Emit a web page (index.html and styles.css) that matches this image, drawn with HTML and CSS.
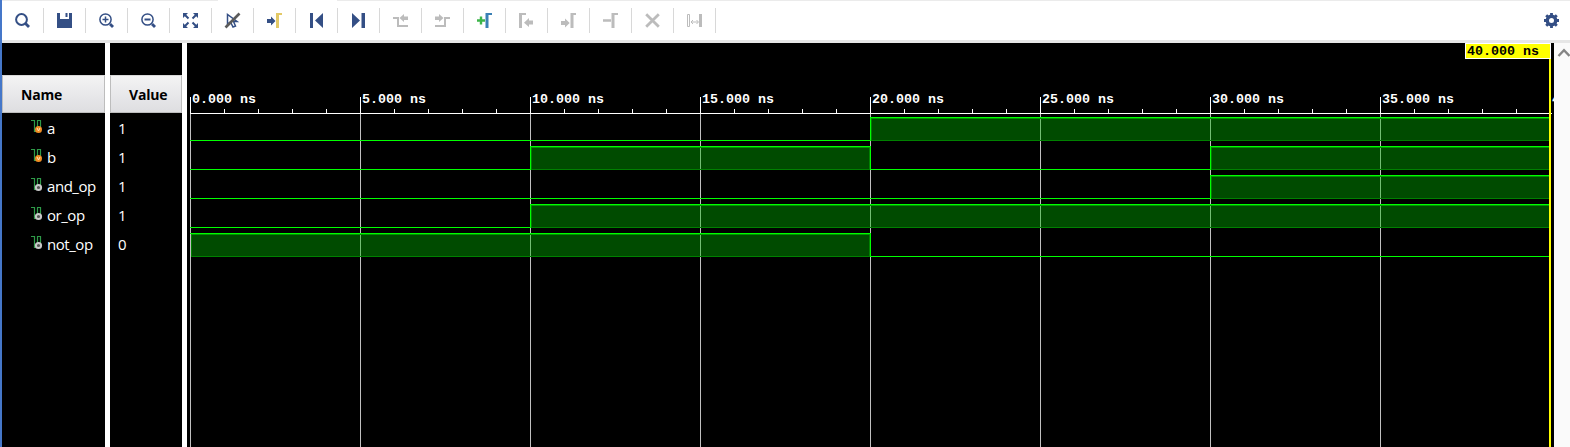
FILE: index.html
```html
<!DOCTYPE html>
<html lang="en">
<head>
<meta charset="utf-8">
<title>Waveform</title>
<link rel="stylesheet" href="styles.css">
</head>
<body>
<div class="window">
  <header class="toolbar">
    <div class="tool"><svg class="icon navy" viewBox="0 0 16 16"><circle cx="6.5" cy="6.5" r="5.4" class="line2"/><path d="M10.5 10.5L14 14" class="line3"/></svg></div>
    <div class="tool"><svg class="icon navy" viewBox="0 0 16 16"><path class="solid" d="M0 0H3V6H12V0H15V15H0zM8.5 0H10.5V4H8.5z"/></svg></div>
    <div class="tool"><svg class="icon navy" viewBox="0 0 16 16"><circle cx="6.5" cy="6.5" r="5.6" class="line15"/><path d="M3.5 6.5H9.5M6.5 3.5V9.5" class="line15"/><path d="M11 11L14 14" class="line3"/></svg></div>
    <div class="tool"><svg class="icon navy" viewBox="0 0 16 16"><circle cx="6.5" cy="6.5" r="5.6" class="line15"/><path d="M3.5 6.5H9.5" class="line2"/><path d="M11 11L14 14" class="line3"/></svg></div>
    <div class="tool"><svg class="icon navy" viewBox="0 0 16 16"><path class="solid" d="M0 0H5L0 5zM15 0V5L10 0zM0 15V10L5 15zM15 15H10L15 10z"/><path class="line2" d="M2 2L5.5 5.5M13 2L9.5 5.5M2 13L5.5 9.5M13 13L9.5 9.5"/></svg></div>
    <div class="tool"><svg class="icon navy" viewBox="0 0 16 16"><path class="line15" d="M2.5 1.5V11L5.5 9L8 14L10.5 13L8.5 8.5H12z"/><path class="slash" d="M.5 14.5L14.5 .5"/></svg></div>
    <div class="tool"><svg class="icon navy" viewBox="0 0 16 16"><path class="solid" d="M0 6H4V3.5L8.5 8L4 12.5V10H0z"/><path class="gold" d="M9 0H15V2H12V15H9z"/></svg></div>
    <div class="tool"><svg class="icon navy" viewBox="0 0 16 16"><path class="solid" d="M1 0H4V15H1zM14 0V15L6 7.5z"/></svg></div>
    <div class="tool"><svg class="icon navy" viewBox="0 0 16 16"><path class="solid" d="M1 0L9 7.5L1 15zM10.5 0H14V15H10.5z"/></svg></div>
    <div class="tool"><svg class="icon grey" viewBox="0 0 16 16"><path class="solid" d="M0 4H6V12H15V14H4V6H0zM15 3.5H11V1L6.5 5L11 9V7H15z"/></svg></div>
    <div class="tool"><svg class="icon grey" viewBox="0 0 16 16"><path class="solid" d="M15 4H9V12H0V14H11V6H15zM0 3.5H4V1L8.5 5L4 9V7H0z"/></svg></div>
    <div class="tool"><svg class="icon" viewBox="0 0 16 16"><path class="green" d="M0 6.3H2.8V3.5H5.2V6.3H8V8.7H5.2V11.5H2.8V8.7H0z"/><path class="blue" d="M8.5 0H15V2H11.5V15H8.5z"/></svg></div>
    <div class="tool"><svg class="icon grey" viewBox="0 0 16 16"><path class="solid" d="M0 0H7V2H3V15H0zM14 7.5H10V5L5 9.7L10 14V11.5H14z"/></svg></div>
    <div class="tool"><svg class="icon grey" viewBox="0 0 16 16"><path class="solid" d="M9.5 0H15V2H12.5V15H9.5zM0 8H4V5.5L8.7 10L4 14.5V12H0z"/></svg></div>
    <div class="tool"><svg class="icon grey" viewBox="0 0 16 16"><path class="solid" d="M8.5 0H15V2H11.5V15H8.5zM0 6.3H8V8.7H0z"/></svg></div>
    <div class="tool"><svg class="icon grey" viewBox="0 0 16 16"><path class="line3" d="M1.2 1.2L13.8 13.8M13.8 1.2L1.2 13.8"/></svg></div>
    <div class="tool"><svg class="icon grey" viewBox="0 0 16 16"><path class="line1" d="M.5 1.5H2.5V13.5H.5zM4 9H11M6 7L4 9L6 11M9.5 7L11.5 9L9.5 11"/><path class="solid" d="M12 1H15V14H12z"/></svg></div>
    <svg class="gear navy" viewBox="0 0 16 16"><circle cx="7.5" cy="7.5" r="4.2" class="ring"/><path class="line3" d="M7.5 0V2.5M7.5 12.5V15M0 7.5H2.5M12.5 7.5H15M2.2 2.2L4 4M11 11L12.8 12.8M12.8 2.2L11 4M4 11L2.2 12.8"/></svg>
  </header>
  <main class="panes">
    <section class="column names">
      <div class="heading">Name</div>
      <div class="row"><svg class="signal" viewBox="0 0 12 14"><use href="#pulse"/><circle cx="7.5" cy="9.5" r="3.5" class="orange"/><path class="mark" d="M6 8L7.5 11L9 8"/></svg>a</div>
      <div class="row"><svg class="signal" viewBox="0 0 12 14"><use href="#pulse"/><circle cx="7.5" cy="9.5" r="3.5" class="orange"/><path class="mark" d="M6 8L7.5 11L9 8"/></svg>b</div>
      <div class="row"><svg class="signal" viewBox="0 0 12 14"><use href="#pulse"/><circle cx="7.5" cy="9.5" r="2.6" class="knob"/></svg>and_op</div>
      <div class="row"><svg class="signal" viewBox="0 0 12 14"><use href="#pulse"/><circle cx="7.5" cy="9.5" r="2.6" class="knob"/></svg>or_op</div>
      <div class="row"><svg class="signal" viewBox="0 0 12 14"><use href="#pulse"/><circle cx="7.5" cy="9.5" r="2.6" class="knob"/></svg>not_op</div>
    </section>
    <section class="column values">
      <div class="heading">Value</div>
      <div class="row">1</div>
      <div class="row">1</div>
      <div class="row">1</div>
      <div class="row">1</div>
      <div class="row">0</div>
    </section>
    <svg class="waves" viewBox="187 43 1367 404" shape-rendering="crispEdges">
      <defs>
        <g id="pulse"><path class="pulse" d="M0 .5H3.5V11.5H6M6.5 7V.5H9.5V8"/></g>
        <pattern id="ticks" x="190" y="109" width="34" height="4" patternUnits="userSpaceOnUse"><path fill="#fff" d="M0 0h1v4h-1z"/></pattern>
      </defs>
      <path class="grid" d="M190.5 114V447M360.5 114V447M530.5 114V447M700.5 114V447M870.5 114V447M1040.5 114V447M1210.5 114V447M1380.5 114V447"/>
      <path class="axis" d="M190 113.5H1552M190.5 97V114M360.5 97V114M530.5 97V114M700.5 97V114M870.5 97V114M1040.5 97V114M1210.5 97V114M1380.5 97V114"/>
      <rect x="190" y="109" width="1360" height="4" fill="url(#ticks)"/>
      <g class="ruler">
        <text x="192" y="103">0.000 ns</text><text x="362" y="103">5.000 ns</text><text x="532" y="103">10.000 ns</text><text x="702" y="103">15.000 ns</text>
        <text x="872" y="103">20.000 ns</text><text x="1042" y="103">25.000 ns</text><text x="1212" y="103">30.000 ns</text><text x="1382" y="103">35.000 ns</text>
        <text x="1552" y="103">40.000 ns</text>
      </g>
      <path class="fill" d="M871 118H1549V140H871zM531 147H870V169H531zM1211 147H1549V169H1211zM1211 176H1549V198H1211zM531 205H1549V227H531zM191 234H870V256H191z"/>
      <path class="edge" d="M1549 140.5H871.5V118M531.5 148V169.5H869.5V148M1549 169.5H1211.5V148M1549 198.5H1211.5V177M1549 227.5H531.5V206M191.5 235V256.5H869.5V235"/>
      <path class="shade" d="M871 118.5H1549M531 147.5H870M1211 147.5H1549M1211 176.5H1549M531 205.5H1549M191 234.5H870"/>
      <path class="trace" d="M190 140.5H870.5V117.5H1549M190 169.5H530.5V146.5H870.5V169.5H1210.5V146.5H1549M190 198.5H1210.5V175.5H1549M190 227.5H530.5V204.5H1549M190 233.5H870.5V256.5H1549"/>
      <rect class="cursor" x="1549" y="43" width="2" height="404"/>
      <path fill="#fff" d="M1465 43H1551V59H1465z"/>
      <rect class="cursor" x="1466" y="44" width="84" height="14"/>
      <text class="stamp" x="1467" y="55">40.000 ns</text>
    </svg>
    <aside class="scroll"><svg class="chevron" viewBox="0 0 14 10"><path d="M1.5 8L7 2.2L12.5 8"/></svg></aside>
  </main>
</div>
</body>
</html>
```
FILE: styles.css
```css
* { box-sizing: border-box; }
body { margin: 0; background: #fff; }
.window { width: 1570px; height: 447px; overflow: hidden; border-left: 2px solid #4577c9; display: flex; flex-direction: column; }
.toolbar { height: 43px; flex: none; display: flex; align-items: flex-start; padding-top: 8px; border-bottom: 3px solid #e6e6e6;
  background: linear-gradient(90deg, #ebebeb 216px, #fff 216px 335px, #ebebeb 335px) top / 100% 1px no-repeat #fff; }
.tool { width: 42px; height: 25px; padding: 5px 0 0 13px; border-right: 1px solid #d8d8d8; }
.icon, .gear { display: block; width: 16px; height: 16px; overflow: visible; }
.gear { margin: 5px 10px 0 auto; }
.navy { color: #344f85; }
.grey { color: #bcbcbc; }
.solid { fill: currentColor; fill-rule: evenodd; }
.line1, .line15, .line2, .line3, .ring { fill: none; stroke: currentColor; }
.line1 { stroke-width: 1; }
.line15 { stroke-width: 1.5; }
.line2 { stroke-width: 2; }
.line3 { stroke-width: 2.8; }
.ring { stroke-width: 3.4; }
.slash { stroke: #5b5b5b; stroke-width: 2.6; }
.gold { fill: #e3c967; }
.green { fill: #3db54a; }
.blue { fill: #3a80b5; }
.panes { display: flex; flex: 1; min-height: 0; }
.column { background: #000; color: #fff; border-right: 5px solid #fff; padding-top: 32px; font: 15px/29px "Open Sans", "Noto Sans", sans-serif; }
.names { width: 108px; }
.values { width: 77px; }
.heading { height: 38px; line-height: 37px; padding-left: 18px; border: 1px solid #bdbdbd; border-top-color: #d8d8d8; background: linear-gradient(#f3f3f4, #dedee1); color: #000; font-weight: 700; font-size: 14px; letter-spacing: -.2px; }
.row { height: 29px; display: flex; align-items: center; line-height: 31px; padding-top: 2px; }
.names .row { padding-left: 29px; letter-spacing: -.45px; }
.values .row { padding-left: 8px; }
.signal { width: 12px; height: 14px; margin: -3px 4px 0 0; overflow: visible; }
.pulse { fill: none; stroke: #2e9a48; stroke-width: 1.2; }
.orange { fill: #f08c22; }
.mark { fill: none; stroke: #ffe2b8; stroke-width: 1; }
.knob { fill: #555; stroke: #c8c8c8; stroke-width: 2; }
.waves { display: block; width: 1367px; height: 404px; background: #000; flex: none; }
.grid { stroke: #c0c0c0; }
.axis { stroke: #fff; fill: none; }
.ruler, .stamp { font: bold 13.333px "Liberation Mono", monospace; fill: #fff; white-space: pre; }
.stamp { fill: #000; }
.fill { fill: rgba(0, 187, 0, .4); }
.edge { fill: none; stroke: #008000; }
.shade { stroke: #009600; }
.trace { fill: none; stroke: #0f0; }
.cursor { fill: #ff0; }
.scroll { flex: 1; background: #fafafa; padding: 5px 0 0 3px; overflow: hidden; }
.chevron { display: block; width: 14px; height: 10px; fill: none; stroke: #858585; stroke-width: 2.4; }
```
